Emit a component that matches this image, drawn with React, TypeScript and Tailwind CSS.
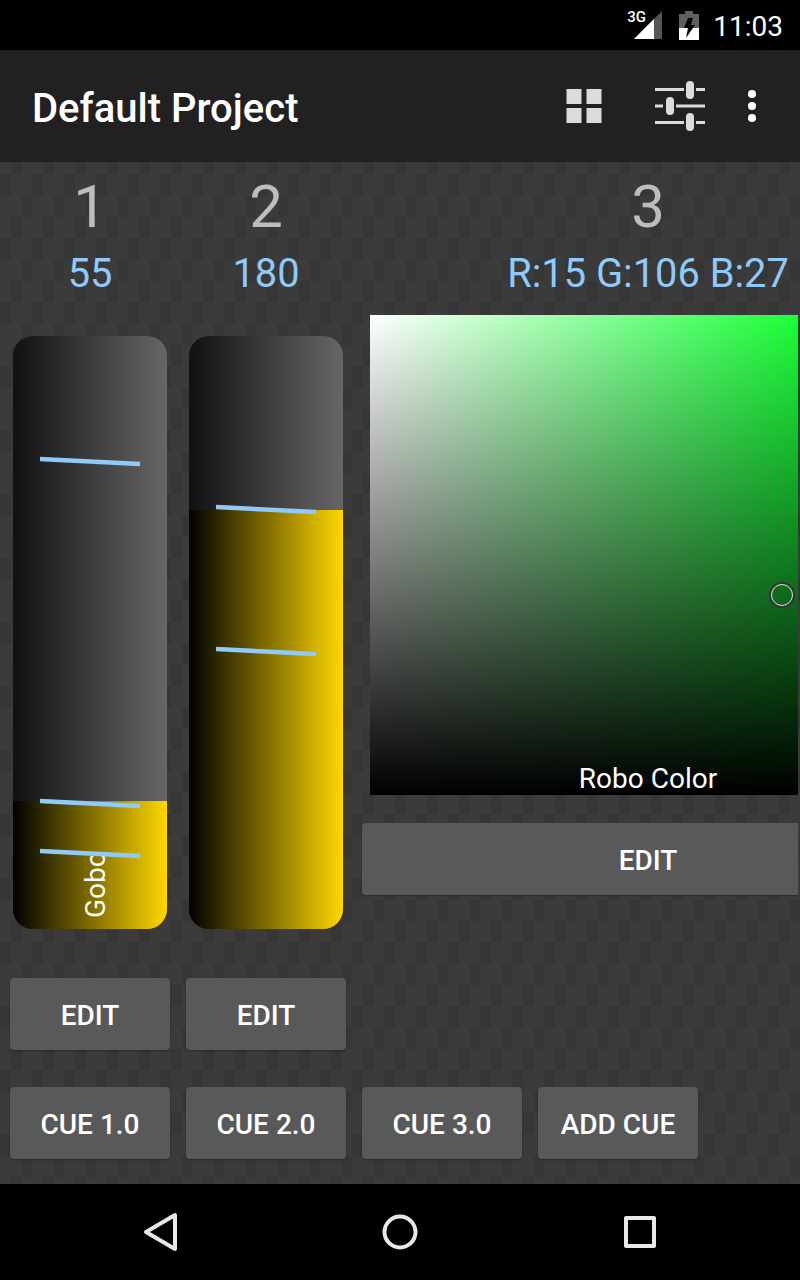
const roboto = "font-['Roboto',sans-serif]";

function PageTexture() {
  return (
    <svg className="absolute inset-0 h-full w-full" aria-hidden="true">
      <defs>
        <pattern id="tex" width="32" height="64" patternUnits="userSpaceOnUse">
          <rect width="32" height="64" fill="#3b3b3b" />
          <rect x="0" y="12" width="11" height="22" fill="#363636" />
          <rect x="21.5" y="34" width="10.5" height="21" fill="#363636" />
          <rect x="11" y="55" width="10.5" height="9" fill="#363636" />
          <rect x="11" y="0" width="10.5" height="12" fill="#363636" />
        </pattern>
      </defs>
      <rect width="100%" height="100%" fill="url(#tex)" />
    </svg>
  );
}

function StatusBar() {
  return (
    <div className="flex h-[50px] shrink-0 items-center justify-end bg-black pr-[17px]">
      <div className="relative h-[50px] w-[35px]">
        <svg className="absolute left-[7px] top-[11px]" width="28" height="28" viewBox="0 0 28 28">
          <path d="M28 0V28H0Z" fill="#555555" />
          <path d="M20 8V28H0Z" fill="#ffffff" />
        </svg>
        <span className={`absolute left-0 top-[8px] text-[15px] leading-[18px] font-medium text-white ${roboto}`}>3G</span>
      </div>
      <svg className="ml-[17px]" width="20" height="29" viewBox="0 0 20 29">
        <path d="M6 0H14V3H20V29H0V3H6Z" fill="#606060" />
        <path d="M0 17H20V29H0Z" fill="#ffffff" />
        <path d="M9 7H14L12 14H16L7 27L9 17H5Z" fill="#000000" />
      </svg>
      <span className={`ml-[14px] pt-[3px] text-[28px] leading-[50px] text-white ${roboto}`}>11:03</span>
    </div>
  );
}

function Toolbar() {
  return (
    <div className="relative flex h-[112px] shrink-0 items-center bg-[#212121] pl-[32px] pr-[44px]">
      <h1 className={`pt-[6px] text-[40px] leading-[48px] font-medium text-white ${roboto}`}>Default Project</h1>
      <svg className="ml-auto" width="36" height="34" viewBox="0 0 36 34" fill="#dcdcdc">
        <rect x="0.5" y="0" width="15" height="15" />
        <rect x="20.5" y="0" width="15" height="15" />
        <rect x="0.5" y="19" width="15" height="15" />
        <rect x="20.5" y="19" width="15" height="15" />
      </svg>
      <svg className="ml-[53px]" width="50" height="50" viewBox="0 0 50 50">
        <g fill="#dcdcdc">
          <rect x="0" y="7" width="29" height="3" />
          <rect x="41" y="7" width="9" height="3" />
          <rect x="0" y="23.5" width="8" height="3" />
          <rect x="21" y="23.5" width="29" height="3" />
          <rect x="0" y="40" width="29" height="3" />
          <rect x="41" y="40" width="9" height="3" />
          <rect x="31" y="0" width="8" height="18" rx="4" />
          <rect x="11" y="16" width="8" height="18" rx="4" />
          <rect x="31" y="32" width="8" height="18" rx="4" />
        </g>
      </svg>
      <svg className="ml-[43px]" width="8" height="32" viewBox="0 0 8 32" fill="#ffffff">
        <circle cx="4" cy="4" r="4" />
        <circle cx="4" cy="16" r="4" />
        <circle cx="4" cy="28" r="4" />
      </svg>
    </div>
  );
}

function EditButton({ label, className = "" }: { label: string; className?: string }) {
  return (
    <button
      className={`flex h-[72px] w-[160px] shrink-0 items-center justify-center rounded-[4px] bg-[#59595a] pt-1 text-[28px] font-medium text-white shadow-[0_1px_2px_rgba(0,0,0,0.3)] ${roboto} ${className}`}
    >
      {label}
    </button>
  );
}

function Heading({ num, value }: { num: string; value: string }) {
  return (
    <>
      <div className={`mt-[10px] h-[70px] text-center text-[60px] leading-[70px] text-[#bdbdbd] ${roboto}`}>{num}</div>
      <div className={`mt-[6px] h-[50px] whitespace-nowrap pt-[2px] text-center text-[39.8px] leading-[48px] text-[#90caf9] ${roboto}`}>{value}</div>
    </>
  );
}

function Fader({ fillClass, lines, children }: { fillClass: string; lines: number[]; children?: React.ReactNode }) {
  return (
    <div className="relative mx-[3px] mt-[38px] h-[593px] w-[154px] overflow-hidden rounded-[20px] bg-[linear-gradient(to_right,#111111,#666666)]">
      <div className={`absolute inset-x-0 bottom-0 bg-[linear-gradient(to_right,#000000,#ffd800)] ${fillClass}`} />
      {children}
      <svg className="absolute inset-0" width="154" height="593">
        {lines.map((y) => (
          <line key={y} x1="27" y1={y} x2="127" y2={y + 5} stroke="#90caf9" strokeWidth="4.5" />
        ))}
      </svg>
    </div>
  );
}

function ColorColumn() {
  return (
    <div className="flex w-[572px] shrink-0 flex-col">
      <Heading num="3" value="R:15 G:106 B:27" />
      <div className="relative mt-[17px] h-[480px] w-full">
        <div className="relative ml-2 h-[480px] w-[480px] bg-[linear-gradient(to_right,#ffffff,#00ff22)]">
          <div className="absolute inset-0 bg-[linear-gradient(to_bottom,rgba(0,0,0,0),#000000)]" />
          <div className="absolute left-[399px] top-[267px] h-[26px] w-[26px] rounded-full border-2 border-[#333333]">
            <div className="h-full w-full rounded-full border border-[#e0e0e0]" />
          </div>
        </div>
        <div className={`absolute inset-x-0 bottom-0 text-center text-[28px] leading-[32px] text-white ${roboto}`}>Robo Color</div>
      </div>
      <button
        className={`mt-[28px] flex h-[72px] w-full items-center justify-center rounded-[4px] bg-[#59595a] pt-1 text-[28px] font-medium text-white shadow-[0_1px_2px_rgba(0,0,0,0.3)] ${roboto}`}
      >
        EDIT
      </button>
    </div>
  );
}

function NavBar() {
  return (
    <div className="relative flex h-[96px] shrink-0 items-center bg-black">
      <svg className="ml-[143px]" width="36" height="40" viewBox="0 0 36 40" fill="none" stroke="#e8e8e8" strokeWidth="4" strokeLinejoin="round">
        <path d="M3 20L32 3V37Z" />
      </svg>
      <svg className="ml-[203px]" width="36" height="36" viewBox="0 0 36 36" fill="none" stroke="#e8e8e8" strokeWidth="4">
        <circle cx="18" cy="18" r="15.5" />
      </svg>
      <svg className="ml-[206px]" width="32" height="32" viewBox="0 0 32 32" fill="none" stroke="#e8e8e8" strokeWidth="4" strokeLinejoin="round">
        <rect x="2" y="2" width="28" height="28" />
      </svg>
    </div>
  );
}

export default function App() {
  return (
    <div className="flex h-[1280px] w-[800px] flex-col overflow-hidden bg-black">
      <StatusBar />
      <Toolbar />
      <main className="relative flex-1 overflow-hidden">
        <PageTexture />
        <div className="relative flex w-[798px] flex-col overflow-hidden pb-[25px] pl-[10px]">
          <div className="flex gap-4">
            <div className="w-[160px] shrink-0">
              <Heading num="1" value="55" />
              <Fader fillClass="h-[128px]" lines={[123, 465, 515]}>
                <div className="absolute bottom-[11px] left-[66px] h-[62px] w-[33px] overflow-hidden">
                  <div className={`h-full rotate-180 text-[28px] leading-[33px] text-white [writing-mode:vertical-rl] ${roboto}`}>Gobo</div>
                </div>
              </Fader>
              <EditButton label="EDIT" className="mt-[49px]" />
            </div>
            <div className="w-[160px] shrink-0">
              <Heading num="2" value="180" />
              <Fader fillClass="h-[419px]" lines={[171, 313]} />
              <EditButton label="EDIT" className="mt-[49px]" />
            </div>
            <ColorColumn />
          </div>
          <div className="mt-[37px] flex gap-4">
            <EditButton label="CUE 1.0" />
            <EditButton label="CUE 2.0" />
            <EditButton label="CUE 3.0" />
            <EditButton label="ADD CUE" />
          </div>
        </div>
      </main>
      <NavBar />
    </div>
  );
}
